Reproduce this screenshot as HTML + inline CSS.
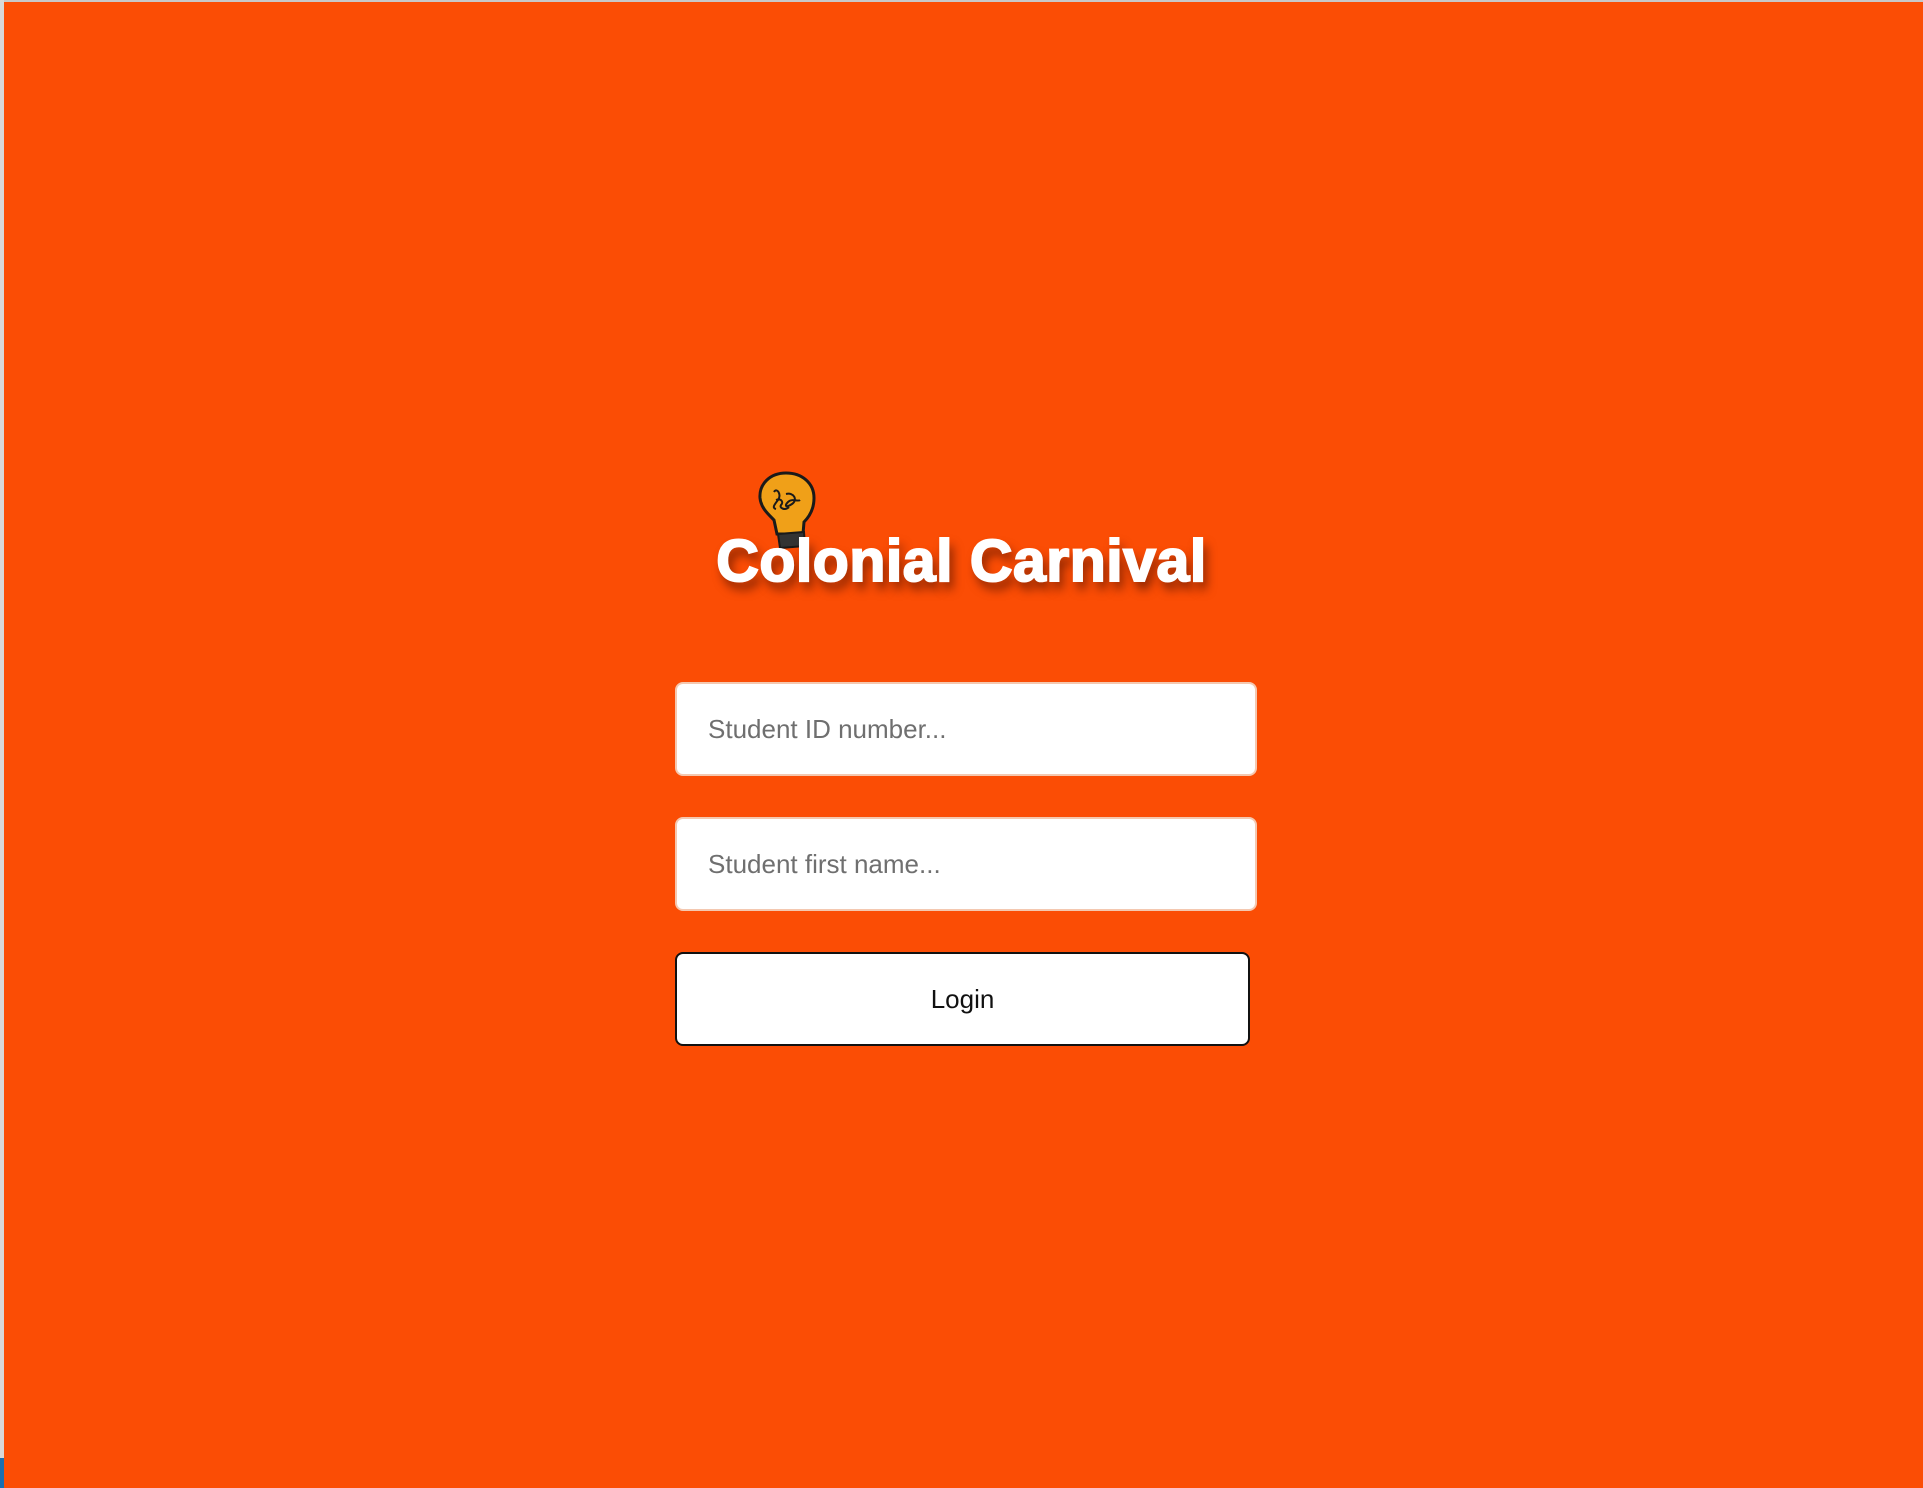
<!DOCTYPE html>
<html><head><meta charset="utf-8"><style>
html,body{margin:0;padding:0}
body{width:1923px;height:1488px;background:#fb4d05;position:relative;overflow:hidden;font-family:"Liberation Sans",sans-serif}
.edge{position:absolute;left:0;top:0;width:4px;height:1488px;background:#d8d8d8}
.edge2{position:absolute;left:0;bottom:0;width:4px;height:30px;background:#1a6fb0}
.topl{position:absolute;left:0;top:0;width:1923px;height:2px;background:#c8c8c8}
.title{position:absolute;left:0;width:1923px;top:527px;text-align:center;color:#fff;font-weight:bold;font-size:59px;letter-spacing:0.5px;-webkit-text-stroke:2px #fff;text-shadow:4px 8px 10px rgba(90,20,0,.75);padding-left:0px}
.bulb{position:absolute;left:756px;top:470px}
.inp{position:absolute;left:675px;width:582px;height:94px;background:#fff;border:2px solid #f4c8b0;border-radius:8px;box-sizing:border-box;color:#6f6f6f;font-size:26px;padding-left:31px;line-height:90px}
.btn{position:absolute;left:675px;top:952px;width:575px;height:94px;background:#fff;border:2px solid #111;border-radius:8px;box-sizing:border-box;text-align:center;line-height:90px;font-size:26px;color:#111}
</style></head><body>
<div class="topl"></div><div class="edge"></div><div class="edge2"></div>
<svg class="bulb" width="62" height="90" viewBox="0 0 62 90">
<path d="M30 3C14 3 3 14 4 28c1 10 8 16 14 22l3 14h26l1-12c6-6 10-14 10-24C58 13 46 3 30 3z" fill="#f0a018" stroke="#1a1a1a" stroke-width="3"/>
<path d="M22 64l26-2 1 14-25 2z" fill="#333" stroke="#1a1a1a" stroke-width="2"/>
<path d="M18 22c3-5 8 3 4 8s-6 8-2 9M20 30c5-2 8 2 5 5-2 3 4 6 8 2M30 24c8-2 12 6 6 10s-8 2-4-2c4-4 10 0 12-2" fill="none" stroke="#1a1a1a" stroke-width="2"/>
</svg>
<div class="title">Colonial Carnival</div>
<div class="inp" style="top:682px">Student ID number...</div>
<div class="inp" style="top:817px">Student first name...</div>
<div class="btn">Login</div>
</body></html>
